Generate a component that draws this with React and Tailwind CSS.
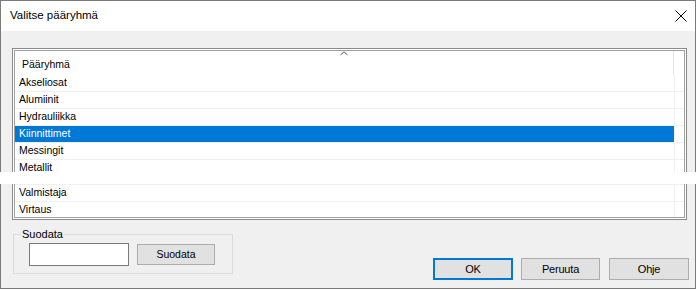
import React from 'react';

const rows = ['Akseliosat', 'Alumiinit', 'Hydrauliikka', 'Kiinnittimet', 'Messingit', 'Metallit'];
const lowerRows = ['Valmistaja', 'Virtaus'];

const ListRow = ({ label, selected, last }) => (
    <div className={`flex ${last ? 'h-[15px]' : 'h-[17px] border-b border-[#f0f0f0]'}`}>
        <div
            className={`w-[659px] pl-[4px] flex items-center ${
                selected ? 'bg-[#0078d7] text-white' : 'text-black'
            }`}
        >
            {label}
        </div>
        <div className="w-px bg-[#f0f0f0]" />
        <div className="flex-1" />
    </div>
);

const DlgButton = ({ children, primary, width }) => (
    <button
        className={`h-[22px] ${width} bg-[#e1e1e1] text-[11px] tracking-[-0.2px] text-black flex items-center justify-center ${
            primary ? 'border-2 border-[#0078d7]' : 'border border-[#adadad]'
        }`}
    >
        {children}
    </button>
);

export default function App() {
    return (
        <div
            className="relative w-[699px] h-[290px] bg-white overflow-hidden"
            style={{ fontFamily: '"Liberation Sans", Arial, sans-serif' }}
        >
            <div className="w-[696px] h-[289px] border border-[#7a7a7a] flex flex-col">
                {/* Title bar */}
                <div className="h-[30px] bg-white flex items-center pl-[9px] pr-[8px]">
                    <span className="text-[11.5px] text-black">Valitse pääryhmä</span>
                    <svg className="ml-auto" width="12" height="12" viewBox="0 0 12 12">
                        <path d="M0.5 0.5 L11.5 11.5 M11.5 0.5 L0.5 11.5" stroke="#000" strokeWidth="1" fill="none" />
                    </svg>
                </div>

                {/* Client */}
                <div className="flex-1 bg-[#f0f0f0] flex flex-col">
                    {/* List view */}
                    <div className="ml-[11px] mt-[17px] w-[675px] h-[172px] border border-[#8a8a8a] bg-white p-px">
                        <div className="h-full border border-[#a0a0a0] bg-white text-[10.5px] flex flex-col overflow-hidden">
                            <div className="relative h-[24px] flex shrink-0">
                                <div className="w-[659px] border-r border-[#e5e5e5] pl-[7px] pt-[3px] flex items-center">
                                    Pääryhmä
                                </div>
                                <svg className="absolute left-[325px] top-0" width="8" height="5" viewBox="0 0 8 5">
                                    <path d="M0.5 4 L4 0.8 L7.5 4" stroke="#5f5f5f" strokeWidth="1" fill="none" />
                                </svg>
                            </div>
                            {rows.map((r, i) => (
                                <ListRow key={r} label={r} selected={i === 3} />
                            ))}
                            <div className="h-[8px] border-b border-[#f0f0f0] flex">
                                <div className="w-[659px]" />
                                <div className="w-px bg-[#f0f0f0]" />
                            </div>
                            {lowerRows.map((r, i) => (
                                <ListRow key={r} label={r} last={i === lowerRows.length - 1} />
                            ))}
                        </div>
                    </div>

                    {/* Bottom area */}
                    <div className="flex items-start mt-[14px]">
                        <div className="relative ml-[12px] w-[220px] h-[40px] border border-[#dcdcdc] flex items-start pl-[15px] pt-[8px] gap-[8px]">
                            <span className="absolute -top-[8px] left-[7px] px-[1px] bg-[#f0f0f0] text-[11px] leading-[14px] text-black">
                                Suodata
                            </span>
                            <div className="w-[100px] h-[23px] bg-white border border-[#7a7a7a]" />
                            <button className="mt-px w-[78px] h-[21px] bg-[#e1e1e1] border border-[#adadad] text-[10.5px] text-black flex items-center justify-center">
                                Suodata
                            </button>
                        </div>
                        <div className="ml-auto mr-[6px] mt-[24px] flex">
                            <DlgButton primary width="w-[80px]">OK</DlgButton>
                            <div className="w-[8px]" />
                            <DlgButton width="w-[79px]">Peruuta</DlgButton>
                            <div className="w-[9px]" />
                            <DlgButton width="w-[80px]">Ohje</DlgButton>
                        </div>
                    </div>
                </div>
            </div>

            {/* repaint glitch strip across the dialog */}
            <div className="absolute left-0 top-[172px] w-full h-[12px] bg-white" />
        </div>
    );
}
